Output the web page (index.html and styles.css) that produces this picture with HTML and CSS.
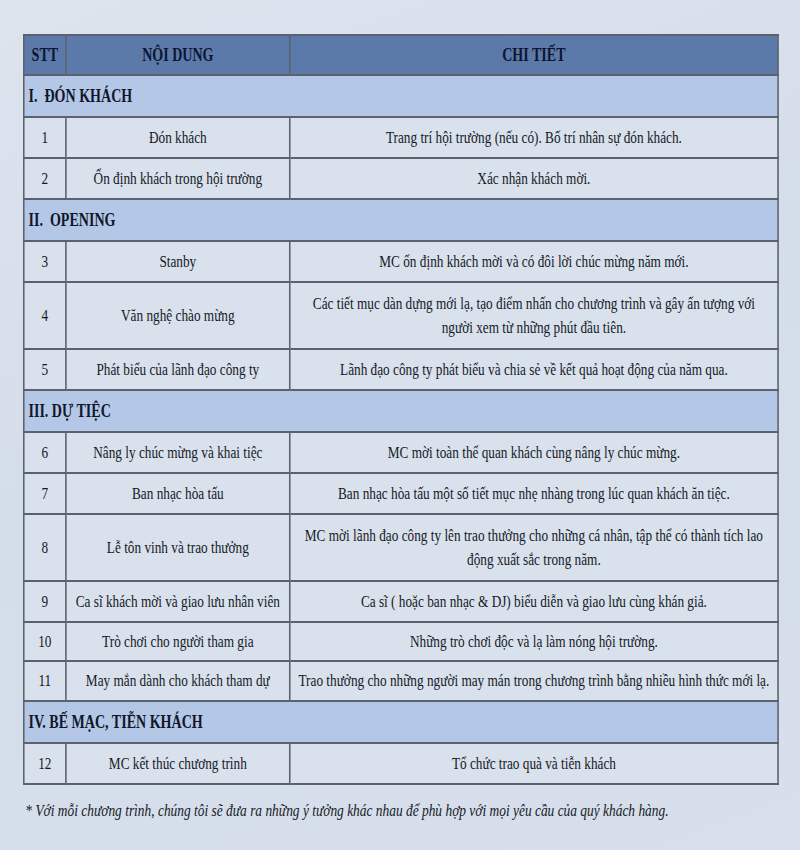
FILE: index.html
```html
<!DOCTYPE html>
<html lang="vi">
<head>
<meta charset="utf-8">
<link rel="stylesheet" href="styles.css">
</head>
<body>
<div class="page">
  <div class="sheet">
    <table class="plan">
      <colgroup>
        <col class="c-stt">
        <col class="c-nd">
        <col class="c-ct">
      </colgroup>
      <thead>
        <tr class="head">
          <th>STT</th>
          <th>NỘI DUNG</th>
          <th>CHI TIẾT</th>
        </tr>
      </thead>
      <tbody>
        <tr class="sec"><td colspan="3">I.&nbsp; ĐÓN KHÁCH</td></tr>
        <tr><td>1</td><td>Đón khách</td><td>Trang trí hội trường (nếu có). Bố trí nhân sự đón khách.</td></tr>
        <tr><td>2</td><td>Ổn định khách trong hội trường</td><td>Xác nhận khách mời.</td></tr>
        <tr class="sec"><td colspan="3">II.&nbsp; OPENING</td></tr>
        <tr><td>3</td><td>Stanby</td><td>MC ổn định khách mời và có đôi lời chúc mừng năm mới.</td></tr>
        <tr class="tall"><td>4</td><td>Văn nghệ chào mừng</td><td>Các tiết mục dàn dựng mới lạ, tạo điểm nhấn cho chương trình và gây ấn tượng với<br>người xem từ những phút đầu tiên.</td></tr>
        <tr><td>5</td><td>Phát biểu của lãnh đạo công ty</td><td>Lãnh đạo công ty phát biểu và chia sẻ về kết quả hoạt động của năm qua.</td></tr>
        <tr class="sec"><td colspan="3">III. DỰ TIỆC</td></tr>
        <tr><td>6</td><td>Nâng ly chúc mừng và khai tiệc</td><td>MC mời toàn thể quan khách cùng nâng ly chúc mừng.</td></tr>
        <tr><td>7</td><td>Ban nhạc hòa tấu</td><td>Ban nhạc hòa tấu một số tiết mục nhẹ nhàng trong lúc quan khách ăn tiệc.</td></tr>
        <tr class="tall"><td>8</td><td>Lễ tôn vinh và trao thưởng</td><td>MC mời lãnh đạo công ty lên trao thưởng cho những cá nhân, tập thể có thành tích lao<br>động xuất sắc trong năm.</td></tr>
        <tr><td>9</td><td>Ca sĩ khách mời và giao lưu nhân viên</td><td>Ca sĩ ( hoặc ban nhạc &amp; DJ) biểu diễn và giao lưu cùng khán giả.</td></tr>
        <tr class="shorter"><td>10</td><td>Trò chơi cho người tham gia</td><td>Những trò chơi độc và lạ làm nóng hội trường.</td></tr>
        <tr class="short"><td>11</td><td>May mắn dành cho khách tham dự</td><td>Trao thưởng cho những người may mán trong chương trình bằng nhiều hình thức mới lạ.</td></tr>
        <tr class="sec"><td colspan="3">IV. BẾ MẠC, TIỄN KHÁCH</td></tr>
        <tr><td>12</td><td>MC kết thúc chương trình</td><td>Tổ chức trao quà và tiễn khách</td></tr>
      </tbody>
    </table>
    <p class="note">* Với mỗi chương trình, chúng tôi sẽ đưa ra những ý tưởng khác nhau để phù hợp với mọi yêu cầu của quý khách hàng.</p>
  </div>
</div>
</body>
</html>
```

FILE: styles.css
```css
html, body {
  margin: 0;
  padding: 0;
}
body {
  width: 800px;
  height: 850px;
  background: linear-gradient(160deg, #dde4ee 0%, #d4ddea 45%, #d6dfeb 100%);
  font-family: "Liberation Serif", "Times New Roman", serif;
  color: #15191f;
  overflow: hidden;
}
.page {
  padding: 34px 0 0 23px;
}
/* the source type is a condensed Times: reproduce by narrowing the sheet */
.sheet {
  width: 967px;
  transform: scaleX(0.78);
  transform-origin: 0 0;
}
.plan {
  width: 967px;
  border-collapse: collapse;
  table-layout: fixed;
  border: 2px solid #5b626d;
}
.c-stt { width: 54px; }
.c-nd { width: 287px; }
.c-ct { width: 626px; }
.plan th, .plan td {
  border: 2px solid #5b626d;
  text-align: center;
  vertical-align: middle;
  padding: 0 2px;
  font-size: 17px;
  line-height: 24px;
}
.head th {
  height: 38px;
  background: #5b7aa9;
  color: #0d1631;
  font-weight: bold;
  font-size: 18px;
}
.plan tbody td {
  height: 39px;
  background: #d9e1ed;
  color: #15191f;
}
.plan tbody tr.sec td {
  height: 40px;
  background: #b4c7e6;
  text-align: left;
  font-weight: bold;
  font-size: 18px;
  color: #10172a;
  padding-left: 5px;
}
.plan tbody tr.tall td { height: 65px; }
.plan tbody tr.short td { height: 38px; }
.plan tbody tr.shorter td { height: 37px; }
.note {
  margin: 16px 0 0 3px;
  font-style: italic;
  font-size: 17.2px;
  color: #15191f;
}
```
